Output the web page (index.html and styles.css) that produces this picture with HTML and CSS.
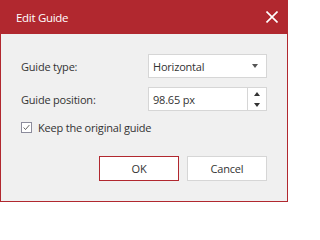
FILE: index.html
```html
<!DOCTYPE html>
<html>
<head>
<meta charset="utf-8">
<link rel="stylesheet" href="styles.css">
</head>
<body>
<div class="dialog">
  <div class="header">
    <span class="title">Edit Guide</span>
    <svg class="close" width="12" height="12" viewBox="0 0 12 12"><path d="M0.5 0.5L11.5 11.5M11.5 0.5L0.5 11.5" stroke="#fff" stroke-width="1.6"/></svg>
  </div>
  <div class="content">
    <div class="row">
      <span class="label">Guide type:</span>
      <div class="field select">
        <span class="value">Horizontal</span>
        <span class="caret"></span>
      </div>
    </div>
    <div class="row">
      <span class="label">Guide position:</span>
      <div class="field spin">
        <span class="value">98.65 px</span>
        <div class="spinner">
          <span class="up"></span>
          <span class="down"></span>
        </div>
      </div>
    </div>
    <label class="check">
      <span class="box"><svg width="11" height="11" viewBox="0 0 11 11"><path d="M2 5.5L4.3 8L9 2.5" fill="none" stroke="#444" stroke-width="1"/></svg></span>
      <span class="check-label">Keep the original guide</span>
    </label>
    <div class="buttons">
      <button class="btn primary">OK</button>
      <button class="btn">Cancel</button>
    </div>
  </div>
</div>
</body>
</html>
```
FILE: styles.css
```css
html, body {
  margin: 0;
  padding: 0;
}
body {
  font-family: "Open Sans", "Noto Sans", sans-serif;
  font-size: 11px;
  letter-spacing: -0.2px;
  color: #333;
}
.dialog {
  width: 288px;
  height: 202px;
  box-sizing: border-box;
  border: 1px solid #b1282f;
  border-top: none;
  background: #f0f0f0;
  display: flex;
  flex-direction: column;
}
.header {
  height: 34px;
  margin: 0 -1px;
  background: #b1282f;
  display: flex;
  align-items: center;
  justify-content: space-between;
  padding: 0 10px 0 16px;
  flex-shrink: 0;
}
.title {
  color: #fff;
  font-size: 11.5px;
  letter-spacing: -0.3px;
}
.close {
  display: block;
}
.content {
  padding: 20px 20px 0 20px;
  display: flex;
  flex-direction: column;
}
.row {
  display: flex;
  align-items: center;
  justify-content: space-between;
  height: 24px;
  margin-bottom: 9px;
}
.field {
  width: 119px;
  height: 24px;
  box-sizing: border-box;
  border: 1px solid #d6d6d6;
  background: #fff;
  display: flex;
  align-items: center;
}
.value {
  padding-left: 4px;
  flex: 1;
}
.caret {
  width: 0;
  height: 0;
  border-left: 3.5px solid transparent;
  border-right: 3.5px solid transparent;
  border-top: 4px solid #555;
  margin-right: 8px;
}
.spinner {
  width: 18px;
  height: 100%;
  border-left: 1px solid #d6d6d6;
  display: flex;
  flex-direction: column;
  align-items: center;
  justify-content: center;
  gap: 7px;
}
.up {
  width: 0;
  height: 0;
  border-left: 3.5px solid transparent;
  border-right: 3.5px solid transparent;
  border-bottom: 4px solid #333;
}
.down {
  width: 0;
  height: 0;
  border-left: 3.5px solid transparent;
  border-right: 3.5px solid transparent;
  border-top: 4px solid #333;
}
.check {
  display: flex;
  align-items: center;
  height: 12px;
  margin-top: 1px;
}
.box {
  width: 11px;
  height: 11px;
  box-sizing: border-box;
  border: 1px solid #8c8c9c;
  background: #fff;
  display: flex;
  align-items: center;
  justify-content: center;
  margin-right: 6px;
}
.box svg {
  display: block;
}
.buttons {
  display: flex;
  justify-content: flex-end;
  gap: 8px;
  margin-top: 23px;
}
.btn {
  width: 80px;
  height: 25px;
  box-sizing: border-box;
  border: 1px solid #d6d6d6;
  background: #fff;
  font-family: inherit;
  font-size: 11px;
  letter-spacing: -0.2px;
  color: #333;
  padding: 0;
}
.btn.primary {
  border-color: #b1282f;
}
```
